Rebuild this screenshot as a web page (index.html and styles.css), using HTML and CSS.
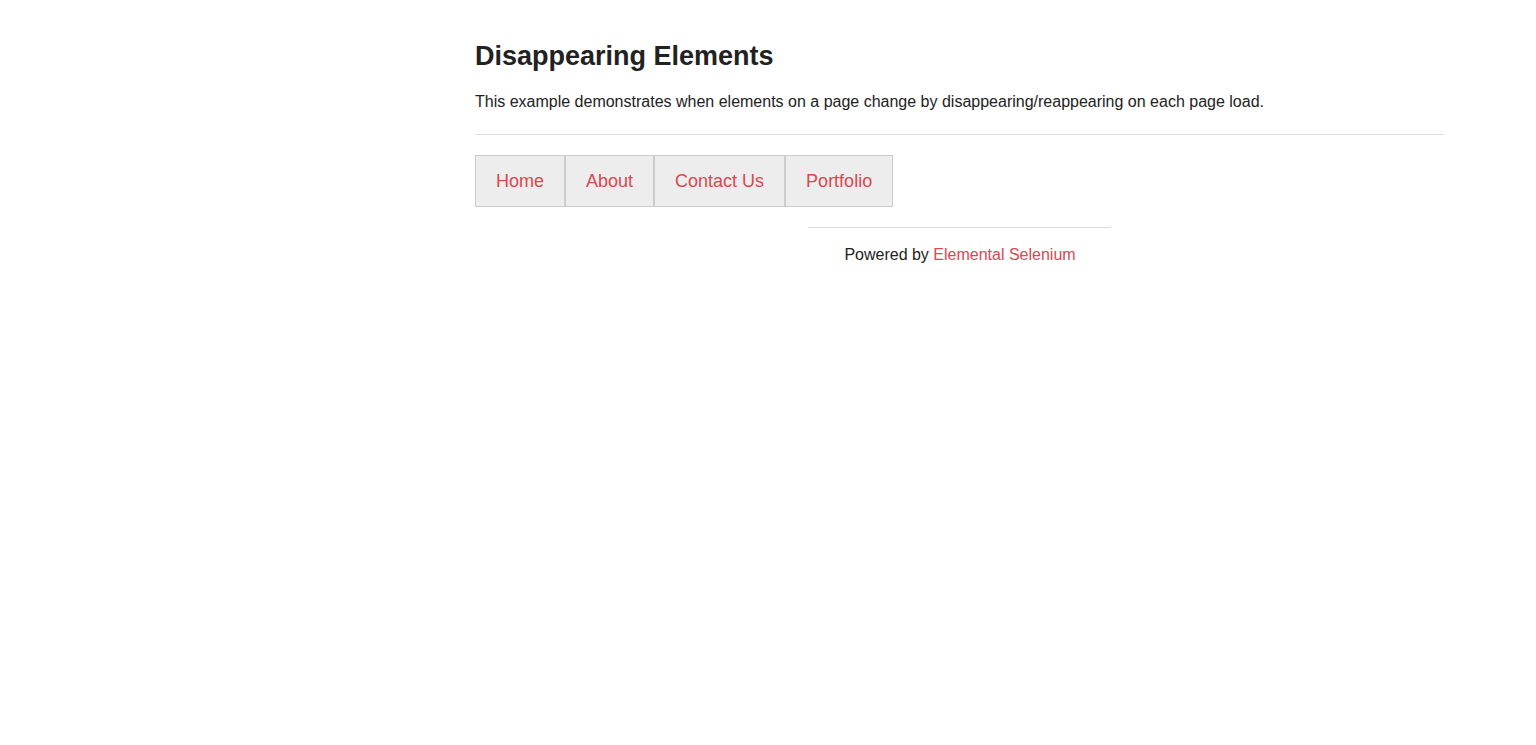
FILE: index.html
```html
<!DOCTYPE html>
<html lang="en">
<head>
<meta charset="utf-8">
<title>The Internet</title>
<link rel="stylesheet" href="styles.css">
</head>
<body>
<div class="page">
  <div class="example">
    <h3 class="title">Disappearing Elements</h3>
    <p class="lead">This example demonstrates when elements on a page change by disappearing/reappearing on each page load.</p>
    <hr class="rule">
    <ul class="menu">
      <li class="menu-item"><a class="menu-link" href="#">Home</a></li>
      <li class="menu-item"><a class="menu-link" href="#">About</a></li>
      <li class="menu-item"><a class="menu-link" href="#">Contact Us</a></li>
      <li class="menu-item"><a class="menu-link" href="#">Portfolio</a></li>
    </ul>
  </div>
  <div class="footer">
    <hr class="footer-rule">
    <div class="footer-text">Powered by <a class="link" href="#">Elemental Selenium</a></div>
  </div>
</div>
</body>
</html>
```

FILE: styles.css
```css
html, body {
  margin: 0;
  padding: 0;
  background: #fff;
}
body {
  font-family: "Liberation Sans", Arial, sans-serif;
  font-size: 16px;
  color: #222;
}
.page {
  width: 969px;
  margin-left: 475px;
  padding-top: 37px;
}
.title {
  margin: 0 0 14px;
  font-size: 27px;
  line-height: 38px;
  font-weight: bold;
  color: #222;
}
.lead {
  margin: 0 0 19px;
  font-size: 16px;
  line-height: 25.6px;
}
.rule {
  margin: 0 0 20px;
  border: 0;
  border-top: 1px solid #ddd;
  height: 0;
}
.menu {
  list-style: none;
  margin: 0;
  padding: 0;
  display: flex;
}
.menu-item {
  border: 1px solid #ccc;
  background: #ededed;
}
.menu-link {
  display: block;
  padding: 0 20px;
  line-height: 50px;
  font-size: 18px;
  color: #dc4650;
  text-decoration: none;
}
.footer {
  width: 303px;
  margin: 20px auto 0;
  text-align: center;
}
.footer-rule {
  margin: 0 0 14px;
  border: 0;
  border-top: 1px solid #ddd;
  height: 0;
}
.footer-text {
  font-size: 16px;
  line-height: 25.6px;
  padding-left: 1px;
}
.link {
  color: #dc4650;
  text-decoration: none;
}
```
